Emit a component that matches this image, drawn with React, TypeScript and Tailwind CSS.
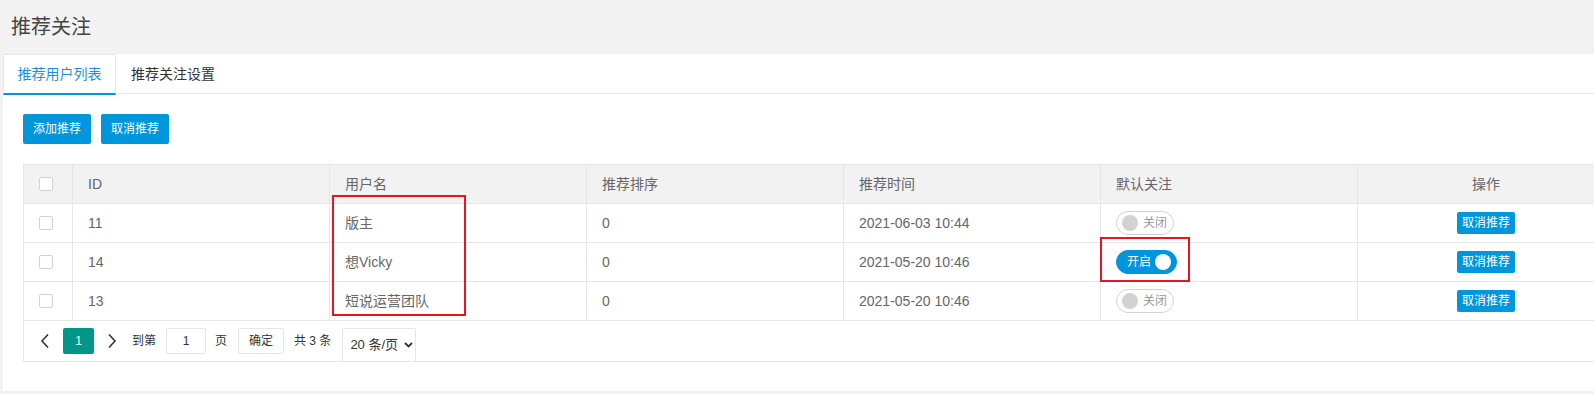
import React from 'react'

const font = "font-['Liberation_Sans','Noto_Sans_CJK_SC',sans-serif]"

type Row = { id: string; name: string; sort: string; time: string; follow: boolean }

const rows: Row[] = [
  { id: '11', name: '版主', sort: '0', time: '2021-06-03 10:44', follow: false },
  { id: '14', name: '想Vicky', sort: '0', time: '2021-05-20 10:46', follow: true },
  { id: '13', name: '短说运营团队', sort: '0', time: '2021-05-20 10:46', follow: false },
]

function Checkbox() {
  return <span className="block w-[14px] h-[14px] border border-[#d2d2d2] rounded-[2px] bg-white" />
}

function Switch({ on }: { on: boolean }) {
  if (on) {
    return (
      <span className="inline-flex items-center h-[24px] rounded-full bg-[#0094dc] border border-[#0094dc] pl-[10px] pr-[5px] gap-[4px]">
        <span className="text-[12px] leading-none text-white">开启</span>
        <span className="w-[16px] h-[16px] rounded-full bg-white" />
      </span>
    )
  }
  return (
    <span className="inline-flex items-center h-[24px] rounded-full bg-white border border-[#d2d2d2] pl-[5px] pr-[6px] gap-[5px]">
      <span className="w-[16px] h-[16px] rounded-full bg-[#d2d2d2]" />
      <span className="text-[12px] leading-none text-[#999]">关闭</span>
    </span>
  )
}

function Cell({ children, className = '' }: { children?: React.ReactNode; className?: string }) {
  return (
    <div className={`w-[257px] shrink-0 h-full border-r border-[#e6e6e6] flex items-center px-[15px] ${className}`}>
      {children}
    </div>
  )
}

function Chevron({ dir }: { dir: 'left' | 'right' }) {
  return (
    <svg width="10" height="16" viewBox="0 0 10 16" fill="none" stroke="#333" strokeWidth="1.6">
      {dir === 'left' ? <path d="M8 1.5 2 8l6 6.5" /> : <path d="M2 1.5 8 8l-6 6.5" />}
    </svg>
  )
}

export default function App() {
  return (
    <div className={`relative w-full h-[394px] overflow-hidden bg-[#f2f2f2] text-[#666] ${font}`}>
      <div className="h-[54px] flex items-center pl-[11px] text-[20px] text-[#444]">推荐关注</div>

      <div className="ml-[3px] w-[1631px] h-[337px] bg-white">
        {/* tabs */}
        <div className="flex h-[40px] border-b border-[#e6e6e6] text-[14px]">
          <div className="w-[113px] h-[41px] flex items-center justify-center border-l border-t border-r border-[#e6e6e6] border-b-2 border-b-[#0094dc] text-[#1e90d8] bg-white">
            推荐用户列表
          </div>
          <div className="h-[40px] flex items-center px-[15px] text-[#333]">推荐关注设置</div>
        </div>

        <div className="px-[20px] pt-[20px]">
          <div className="flex gap-[10px]">
            <button className="h-[30px] px-[10px] rounded-[2px] bg-[#0096dc] text-white text-[12px]">添加推荐</button>
            <button className="h-[30px] px-[10px] rounded-[2px] bg-[#0096dc] text-white text-[12px]">取消推荐</button>
          </div>

          <div className="mt-[20px] w-[1592px] border-l border-t border-[#e6e6e6] text-[14px]">
            <div className="flex h-[39px] border-b border-[#e6e6e6] bg-[#f2f2f2]">
              <div className="w-[49px] shrink-0 h-full border-r border-[#e6e6e6] flex items-center pl-[15px]">
                <Checkbox />
              </div>
              <Cell>ID</Cell>
              <Cell>用户名</Cell>
              <Cell>推荐排序</Cell>
              <Cell>推荐时间</Cell>
              <Cell>默认关注</Cell>
              <Cell className="justify-center">操作</Cell>
            </div>
            {rows.map((r) => (
              <div key={r.id} className="flex h-[39px] border-b border-[#e6e6e6]">
                <div className="w-[49px] shrink-0 h-full border-r border-[#e6e6e6] flex items-center pl-[15px]">
                  <Checkbox />
                </div>
                <Cell>{r.id}</Cell>
                <Cell>{r.name}</Cell>
                <Cell>{r.sort}</Cell>
                <Cell>{r.time}</Cell>
                <Cell>
                  <Switch on={r.follow} />
                </Cell>
                <Cell className="justify-center">
                  <button className="h-[22px] px-[5px] rounded-[2px] bg-[#0096dc] text-white text-[12px] leading-none">
                    取消推荐
                  </button>
                </Cell>
              </div>
            ))}
            {/* pagination */}
            <div className="flex items-start h-[41px] border-b border-r border-[#e6e6e6] pt-[7px] pl-[6px] text-[12px] text-[#333]">
              <span className="w-[30px] h-[26px] flex items-center justify-center">
                <Chevron dir="left" />
              </span>
              <span className="ml-[3px] w-[31px] h-[26px] flex items-center justify-center rounded-[2px] bg-[#009688] text-white">1</span>
              <span className="ml-[3px] w-[30px] h-[26px] flex items-center justify-center">
                <Chevron dir="right" />
              </span>
              <span className="ml-[5px] h-[26px] flex items-center">到第</span>
              <span className="ml-[10px] w-[40px] h-[26px] flex items-center justify-center border border-[#e6e6e6] rounded-[2px]">1</span>
              <span className="ml-[9px] h-[26px] flex items-center">页</span>
              <span className="ml-[11px] w-[46px] h-[26px] flex items-center justify-center border border-[#e6e6e6] rounded-[2px]">确定</span>
              <span className="ml-[10px] h-[26px] flex items-center">共 3 条</span>
              <span className="ml-[11px] w-[74px] h-[33px] flex items-center gap-[6px] pl-[7px] border-t border-l border-r border-[#e6e6e6] rounded-t-[2px] text-[13px]">
                20 条/页
                <svg width="9" height="6" viewBox="0 0 9 6" fill="none" stroke="#333" strokeWidth="1.8">
                  <path d="M1 1l3.5 3.5L8 1" />
                </svg>
              </span>
            </div>
          </div>
        </div>
      </div>

      {/* annotation boxes */}
      <div className="absolute left-[332px] top-[195px] w-[134px] h-[121px] border-2 border-[#e8141e]" />
      <div className="absolute left-[1100px] top-[237px] w-[90px] h-[45px] border-2 border-[#e8141e]" />
    </div>
  )
}
